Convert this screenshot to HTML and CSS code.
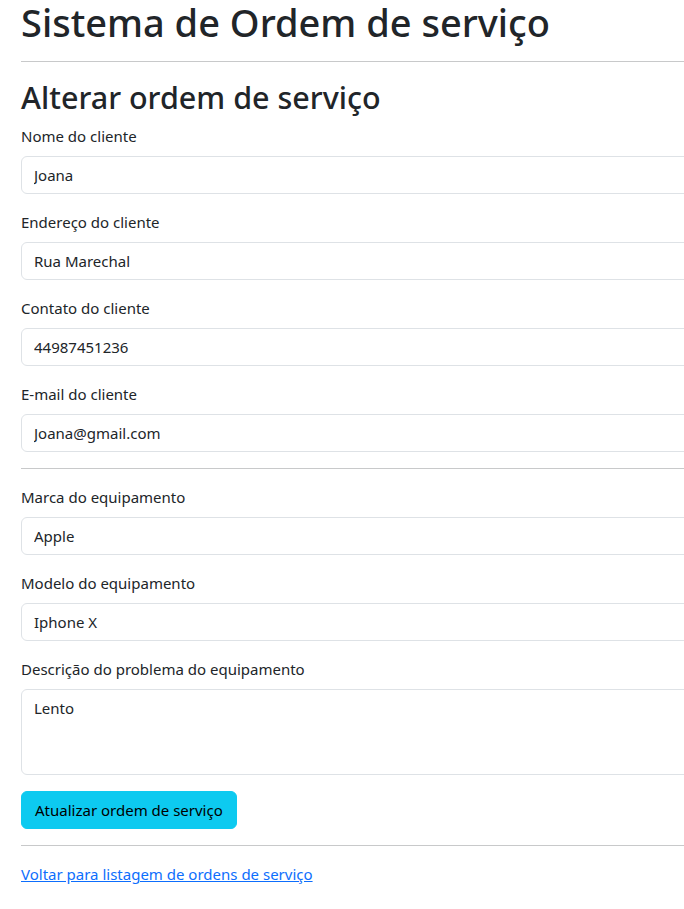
FILE: index.html
```html
<!DOCTYPE html>
<html lang="pt-BR">
<head>
<meta charset="utf-8">
<title>Alterar ordem de serviço</title>
<link rel="stylesheet" href="styles.css">
</head>
<body>
<main class="container">
  <h1 class="title">Sistema de Ordem de serviço</h1>
  <hr class="divider">
  <h2 class="subtitle">Alterar ordem de serviço</h2>
  <form class="form">
    <div class="field">
      <label class="form-label" for="nome">Nome do cliente</label>
      <input class="form-control" id="nome" type="text" value="Joana">
    </div>
    <div class="field">
      <label class="form-label" for="endereco">Endereço do cliente</label>
      <input class="form-control" id="endereco" type="text" value="Rua Marechal">
    </div>
    <div class="field">
      <label class="form-label" for="contato">Contato do cliente</label>
      <input class="form-control" id="contato" type="text" value="44987451236">
    </div>
    <div class="field">
      <label class="form-label" for="email">E-mail do cliente</label>
      <input class="form-control" id="email" type="email" value="Joana@gmail.com">
    </div>
    <hr class="divider">
    <div class="field">
      <label class="form-label" for="marca">Marca do equipamento</label>
      <input class="form-control" id="marca" type="text" value="Apple">
    </div>
    <div class="field">
      <label class="form-label" for="modelo">Modelo do equipamento</label>
      <input class="form-control" id="modelo" type="text" value="Iphone X">
    </div>
    <div class="field">
      <label class="form-label" for="descricao">Descrição do problema do equipamento</label>
      <textarea class="form-control textarea" id="descricao" rows="3">Lento</textarea>
    </div>
    <button class="btn-info" type="button">Atualizar ordem de serviço</button>
  </form>
  <hr class="divider">
  <a class="back-link" href="#">Voltar para listagem de ordens de serviço</a>
</main>
</body>
</html>
```
FILE: styles.css
```css
html, body {
  margin: 0;
  padding: 0;
  overflow: hidden;
  background: #fff;
}
body {
  font-family: "Segoe UI", "Noto Sans", "Open Sans", sans-serif;
  font-size: 15px;
  line-height: 24px;
  color: #212529;
}
.container {
  width: 1100px;
  padding: 0 0 0 21px;
  box-sizing: border-box;
}
.title {
  font-size: 38px;
  font-weight: 500;
  line-height: 45px;
  margin: 0;
}
.divider {
  border: 0;
  border-top: 1px solid #c8c9ca;
  margin: 16px 0;
  height: 0;
}
.subtitle {
  font-size: 30.5px;
  font-weight: 500;
  line-height: 38px;
  margin: 0 0 8px 0;
}
.form {
  margin: 0;
}
.field {
  margin-bottom: 16px;
}
.form-label {
  display: block;
  margin-bottom: 8px;
}
.form-control {
  display: block;
  width: 100%;
  box-sizing: border-box;
  padding: 6px 12px;
  font: inherit;
  color: #212529;
  background: #fff;
  border: 1px solid #dee2e6;
  border-radius: 6px;
  height: 38px;
}
.textarea {
  height: 86px;
  resize: vertical;
}
.btn-info {
  font: inherit;
  color: #000;
  background: #0dcaf0;
  border: 1px solid #0dcaf0;
  border-radius: 6px;
  padding: 6px 13px;
  height: 38px;
  cursor: pointer;
}
.back-link {
  color: #0d6efd;
  text-decoration: underline;
}
```
